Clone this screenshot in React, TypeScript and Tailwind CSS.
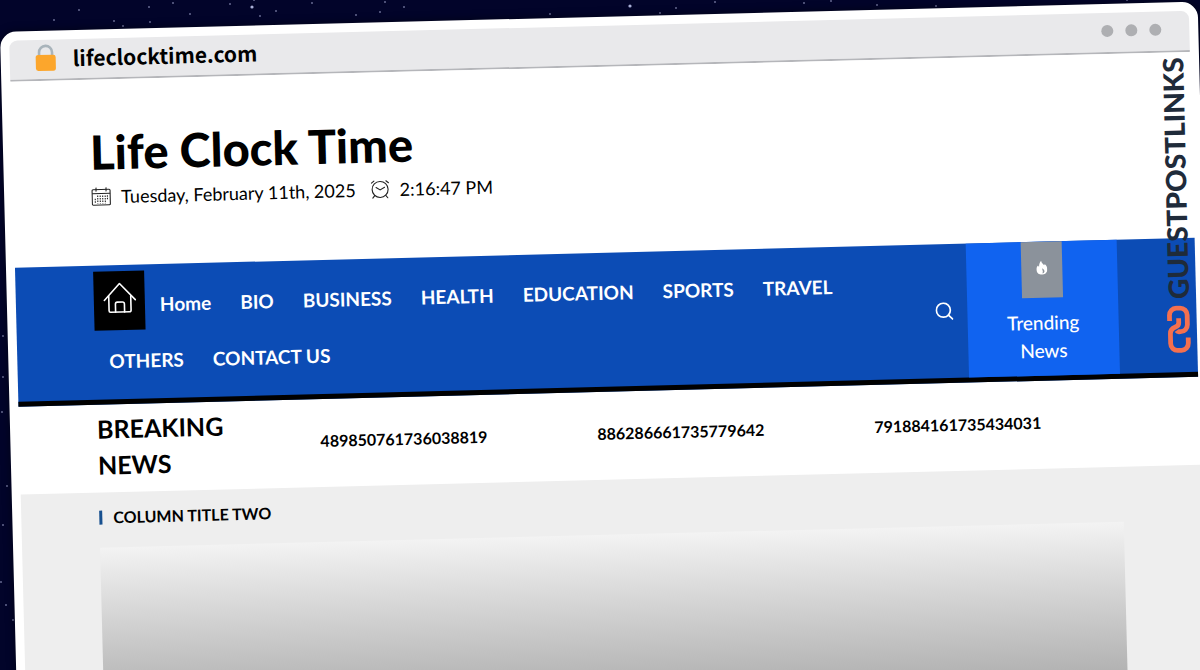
import React from "react";

const menu = ["Home", "BIO", "BUSINESS", "HEALTH", "EDUCATION", "SPORTS", "TRAVEL", "OTHERS", "CONTACT US"];
const ticker = ["489850761736038819", "886286661735779642", "791884161735434031"];

const stars: [number, number, number][] = [
  [79, 10, 1], [54, 20, 1], [114, 21, 1], [149, 7, 1], [150, 22, 1], [123, 26, 1], [190, 14, 1], [173, 3, 1],
  [252, 7, 2], [276, 11, 1], [254, 0, 1], [260, 16, 1], [230, 4, 1], [312, 3, 1], [356, 15, 1], [380, 12, 1],
  [404, 7, 1], [385, 2, 1], [550, 14, 1], [630, 6, 2], [660, 13, 1], [676, 8, 1], [715, 2, 1], [804, 3, 1],
  [831, 1, 1], [877, 5, 1], [936, 6, 1], [1127, 0, 1], [3, 336, 1], [3, 377, 1], [2, 412, 1], [7, 486, 1],
  [3, 525, 1], [1, 582, 1], [6, 605, 1], [13, 620, 1],
];

function Stars() {
  return (
    <svg className="absolute inset-0 h-full w-full" aria-hidden="true">
      {stars.map(([x, y, r]) => (
        <circle key={`${x}-${y}`} cx={x} cy={y} r={r * 0.8} fill="#aab0d8" />
      ))}
    </svg>
  );
}

function LockIcon() {
  return (
    <svg width="22" height="28" viewBox="0 0 22 28" aria-hidden="true">
      <path d="M4.5 13V8.5a6.5 6.5 0 0 1 13 0V13" fill="none" stroke="#a9b4bb" strokeWidth="2.6" />
      <rect x="1" y="11" width="20" height="16" rx="2.5" fill="#fca62c" />
    </svg>
  );
}

function CalendarIcon() {
  return (
    <svg width="20" height="20" viewBox="0 0 20 20" fill="none" stroke="#222" strokeWidth="1.1" aria-hidden="true">
      <rect x="1" y="3" width="18" height="15.5" rx="1" />
      <path d="M1 7h18M5 1v4M15 1v4" />
      <path d="M6.5 9v8M9 9v8M11.5 9v8M14 9v8M16.2 9v5M4 12v5" strokeDasharray="1.5 1" />
    </svg>
  );
}

function AlarmIcon() {
  return (
    <svg width="20" height="20" viewBox="0 0 20 20" fill="none" stroke="#222" strokeWidth="1.1" strokeLinecap="round" aria-hidden="true">
      <circle cx="10" cy="10" r="8" />
      <path d="M6 8l4 2.5L14.5 8M1.5 3.5L4 1.5M18.5 3.5L16 1.5M4.5 16L2.5 18.5M15.5 16l2 2.5" />
    </svg>
  );
}

function HouseIcon() {
  return (
    <svg width="34" height="32" viewBox="0 0 34 32" fill="none" stroke="#fff" strokeWidth="1.6" strokeLinecap="round" strokeLinejoin="round" aria-hidden="true">
      <path d="M1.5 18L17 1.5 32.5 18" />
      <path d="M6 14v14.5a1.5 1.5 0 0 0 1.5 1.5h19a1.5 1.5 0 0 0 1.5-1.5V14" />
      <path d="M12.500 30v-8a2 2 0 0 1 2-2h5a2 2 0 0 1 2 2v8" />
    </svg>
  );
}

function SearchIcon() {
  return (
    <svg width="18" height="18" viewBox="0 0 18 18" fill="none" stroke="#fff" strokeWidth="1.7" strokeLinecap="round" aria-hidden="true">
      <circle cx="8" cy="8" r="7" />
      <path d="M13 13l4 4" />
    </svg>
  );
}

function FlameIcon() {
  return (
    <svg width="11" height="14" viewBox="0 0 11 14" aria-hidden="true">
      <path d="M5 0c.2 2.200 1.800 3.200 2.900 4.500.3-.3.500-.700.500-1.200C10 4.700 11 6.500 11 8.600 11 11.700 8.600 14 5.500 14S0 11.700 0 8.600C0 6.800.8 5.600 1.800 4.600c.2.700.5 1.100 1 1.400C2.800 3.600 3.500 1.500 5 0z" fill="#fff" />
      <path d="M6 7.500c1.300.9 2.100 1.900 2.100 3 0 1.200-1 2-2.300 2 .6-.6.800-1.300.6-2.100-.2-.9-.6-1.700-.4-2.900z" fill="#8b929b" />
    </svg>
  );
}

function ChainIcon() {
  return (
    <svg width="24" height="48" viewBox="0 0 24 48" fill="none" stroke="#f4704f" strokeWidth="4.8" aria-hidden="true">
      <path d="M2.9 15.5V10A7 7 0 0 1 9.900 2.900h3.700A7 7 0 0 1 20.600 10v9.500a7 7 0 0 1-7 7h-1.600a3 3 0 0 1-2.400-1.200" />
      <path d="M21.100 32.500V38a7 7 0 0 1-7 7.100h-3.700A7 7 0 0 1 3.400 38v-9.500a7 7 0 0 1 5-6.700c2.500-.8 3.600-2 3.600-4.300V13" />
    </svg>
  );
}

export default function App() {
  return (
    <div className="relative h-screen overflow-hidden bg-[#02042a] font-['Lato',sans-serif] text-black">
      <Stars />
      <div className="relative mt-8 mr-0.5 min-h-screen origin-top-left rotate-[-1.45deg] rounded-2xl bg-white p-[9px] shadow-[0_0_8px_rgba(0,0,0,0.5)]">
        <div className="flex h-[41px] items-center justify-between rounded-t-lg border-b-2 border-[#b5b6ba] bg-[#e9e9eb] pr-7 pb-1 pl-[25px]">
          <div className="flex items-center gap-4">
            <LockIcon />
            <span className="mt-0.5 font-['Noto_Sans_CJK_SC',sans-serif] text-[21px] leading-none font-bold">lifeclocktime.com</span>
          </div>
          <div className="flex gap-3">
            <span className="size-3 rounded-full bg-[#aeafb2]" />
            <span className="size-3 rounded-full bg-[#aeafb2]" />
            <span className="size-3 rounded-full bg-[#aeafb2]" />
          </div>
        </div>

        <header className="h-[186px] px-[78px] pt-11">
          <h1 className="text-[47px] leading-[56px] font-black">Life Clock Time</h1>
          <div className="mt-px flex gap-3.5 text-[18px] leading-8">
            <div className="flex items-center gap-2.5">
              <CalendarIcon />
              <span>Tuesday, February 11th, 2025</span>
            </div>
            <div className="flex items-center gap-2.5">
              <AlarmIcon />
              <span>2:16:47 PM</span>
            </div>
          </div>
        </header>

        <nav className="flex border-b-[5px] border-black bg-[#0c4cb5] px-[78px] text-white">
          <div className="flex flex-1 flex-wrap content-start gap-x-px pt-1.5">
            <a href="#home" aria-label="Home page" className="-mb-[3px] flex h-[59px] w-[51px] items-center justify-center bg-black pb-1.5">
              <HouseIcon />
            </a>
            {menu.map((item) => (
              <a key={item} href="#menu" className="flex h-14 items-end px-3.5 pb-2 text-[19px] leading-7 font-bold">
                {item}
              </a>
            ))}
          </div>
          <button type="button" aria-label="Search" className="flex w-[46px] items-center justify-center">
            <SearchIcon />
          </button>
          <a href="#trending" className="flex h-[134px] w-[151px] flex-col items-center bg-[#1063f0] text-center">
            <span className="flex h-14 w-[41px] items-center justify-center bg-[#8b929b] pb-1">
              <FlameIcon />
            </span>
            <span className="mt-[11px] w-20 text-[19px] leading-7 font-medium">Trending News</span>
          </a>
        </nav>

        <section className="flex items-center px-[78px] pt-1.5 pb-2.5">
          <h2 className="w-[223px] shrink-0 pr-20 text-[25px] leading-9 font-bold">BREAKING NEWS</h2>
          {ticker.map((item) => (
            <a key={item} href="#story" className="w-[277px] shrink-0 text-[16px] font-bold">
              {item}
            </a>
          ))}
        </section>

        <main className="bg-[#eeeeee] px-[78px] pt-[15px]">
          <h3 className="flex items-center gap-[11px] text-[16px] leading-5 font-bold">
            <span className="h-3.5 w-[3px] bg-[#17508f]" />
            COLUMN TITLE TWO
          </h3>
          <div className="mt-5 h-[240px] bg-linear-to-b from-[#f3f3f3] to-[#8d8d8d]" />
        </main>

        <div className="absolute top-[55px] right-[15px] flex flex-col items-center gap-1.5">
          <span className="rotate-180 text-[28px] leading-6 font-black text-[#1f2b3a] [writing-mode:vertical-rl]">GUESTPOSTLINKS</span>
          <ChainIcon />
        </div>
      </div>
    </div>
  );
}
